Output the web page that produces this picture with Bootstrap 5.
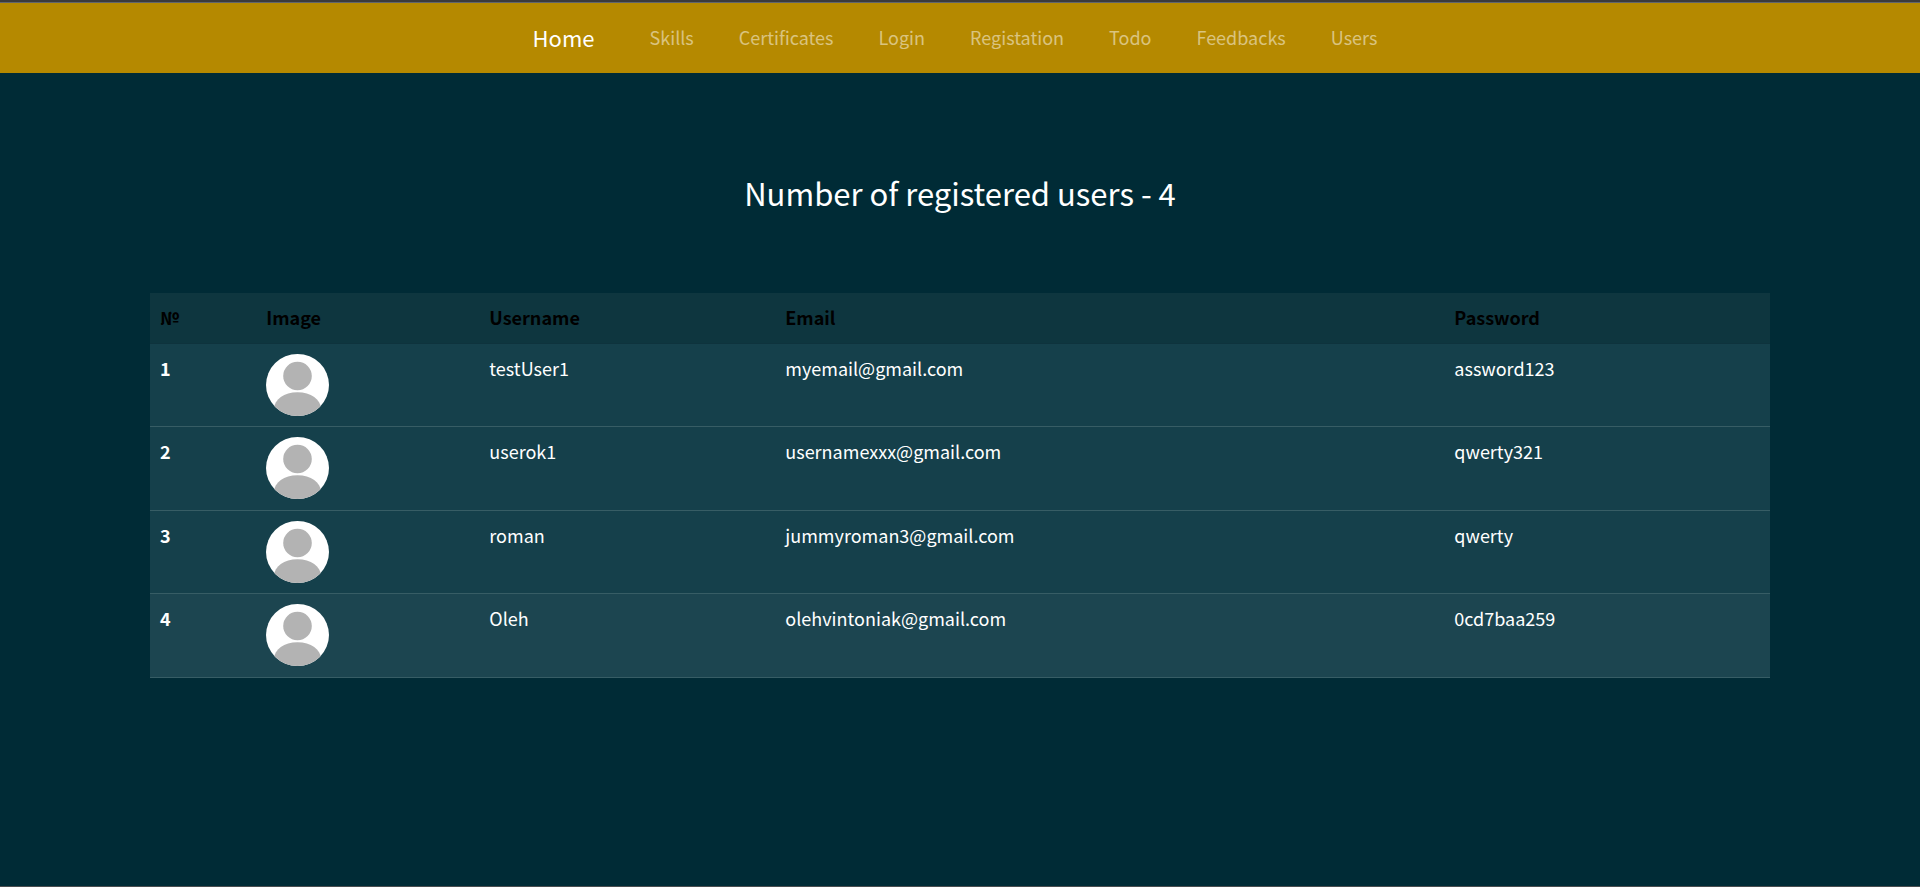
<!DOCTYPE html>
<html lang="en">
<head>
<meta charset="utf-8">
<meta name="viewport" content="width=device-width, initial-scale=1">
<title>Users</title>
<link href="https://cdn.jsdelivr.net/npm/bootstrap@5.3.0/dist/css/bootstrap.min.css" rel="stylesheet">
<style>
  body {
    background: #002b36;
    color: #fff;
    font-family: "Noto Sans CJK SC", "Open Sans", sans-serif;
    font-size: 18px;
    line-height: 28px;
    border-top: 2px solid #3b3b3d;
    border-bottom: 1px solid #4a4e50;
  }
  .site-nav {
    background: #b58900;
    border-top: 1px solid #62656c;
    padding: 15px 15px 17px 27px;
  }
  .site-nav .navbar-brand {
    color: #fff;
    font-size: 22px;
    line-height: 38px;
    padding: 0;
    margin-right: 33px;
  }
  .site-nav .navbar-nav { gap: 1px; }
  .site-nav .navbar-nav .nav-link {
    color: rgba(255, 255, 255, .5);
    padding: 5px 22px;
  }
  .site-nav .navbar-nav .nav-link:hover { color: rgba(255, 255, 255, .75); }
  .page-title {
    font-size: 31px;
    font-weight: 400;
    line-height: 40px;
    margin: 100px 0 80px;
  }
  .users-wrap { max-width: 1650px; padding: 0 15px; }
  .users-table {
    --bs-table-bg: transparent;
    --bs-table-color: #fff;
    border-color: #375d65;
    margin: 0;
    table-layout: fixed;
  }
  .users-table > :not(caption) > * > * { padding: 10px; }
  .users-table > thead > tr > th {
    background: #0e363f;
    color: #000;
    border-color: #0e333d;
    padding-bottom: 12px;
  }
  .users-table > tbody > tr > * { background: #15404b; }
  .users-table > tbody > tr:last-child > * { background: #1c4550; }
  .users-table > tbody > tr:nth-child(even) { height: 84px; }
  .avatar { width: 63px; height: 62px; border-radius: 50%; }
</style>
</head>
<body class="min-vh-100">
<nav class="navbar navbar-expand site-nav justify-content-center" aria-label="Main">
  <a class="navbar-brand" href="#">Home</a>
  <ul class="navbar-nav">
    <li class="nav-item"><a class="nav-link" href="#">Skills</a></li>
    <li class="nav-item"><a class="nav-link" href="#">Certificates</a></li>
    <li class="nav-item"><a class="nav-link" href="#">Login</a></li>
    <li class="nav-item"><a class="nav-link" href="#">Registation</a></li>
    <li class="nav-item"><a class="nav-link" href="#">Todo</a></li>
    <li class="nav-item"><a class="nav-link" href="#">Feedbacks</a></li>
    <li class="nav-item"><a class="nav-link" href="#">Users</a></li>
  </ul>
</nav>

<svg class="d-none" aria-hidden="true">
  <symbol id="person" viewBox="0 0 63 62" preserveAspectRatio="none">
    <rect width="63" height="62" fill="#fff"/>
    <circle cx="31.5" cy="22" r="14.3" fill="#b3b3b3"/>
    <path d="M7.500 56C8.500 45 18 38.300 31.500 38.300S54.500 45 55.500 56V62H7.500Z" fill="#b3b3b3"/>
  </symbol>
</svg>

<main class="container-fluid users-wrap">
  <h1 class="page-title text-center">Number of registered users - 4</h1>
  <table class="table users-table">
    <colgroup>
      <col style="width:6.56%"><col style="width:13.77%"><col style="width:18.27%"><col style="width:41.3%"><col style="width:20.1%">
    </colgroup>
    <thead>
      <tr><th scope="col">№</th><th scope="col">Image</th><th scope="col">Username</th><th scope="col">Email</th><th scope="col">Password</th></tr>
    </thead>
    <tbody>
      <tr><th scope="row">1</th><td><svg class="avatar d-block" role="img" aria-label="testUser1"><use href="#person"/></svg></td><td>testUser1</td><td>myemail@gmail.com</td><td>assword123</td></tr>
      <tr><th scope="row">2</th><td><svg class="avatar d-block" role="img" aria-label="userok1"><use href="#person"/></svg></td><td>userok1</td><td>usernamexxx@gmail.com</td><td>qwerty321</td></tr>
      <tr><th scope="row">3</th><td><svg class="avatar d-block" role="img" aria-label="roman"><use href="#person"/></svg></td><td>roman</td><td>jummyroman3@gmail.com</td><td>qwerty</td></tr>
      <tr><th scope="row">4</th><td><svg class="avatar d-block" role="img" aria-label="Oleh"><use href="#person"/></svg></td><td>Oleh</td><td>olehvintoniak@gmail.com</td><td>0cd7baa259</td></tr>
    </tbody>
  </table>
</main>
<script src="https://cdn.jsdelivr.net/npm/bootstrap@5.3.0/dist/js/bootstrap.bundle.min.js"></script>
</body>
</html>
